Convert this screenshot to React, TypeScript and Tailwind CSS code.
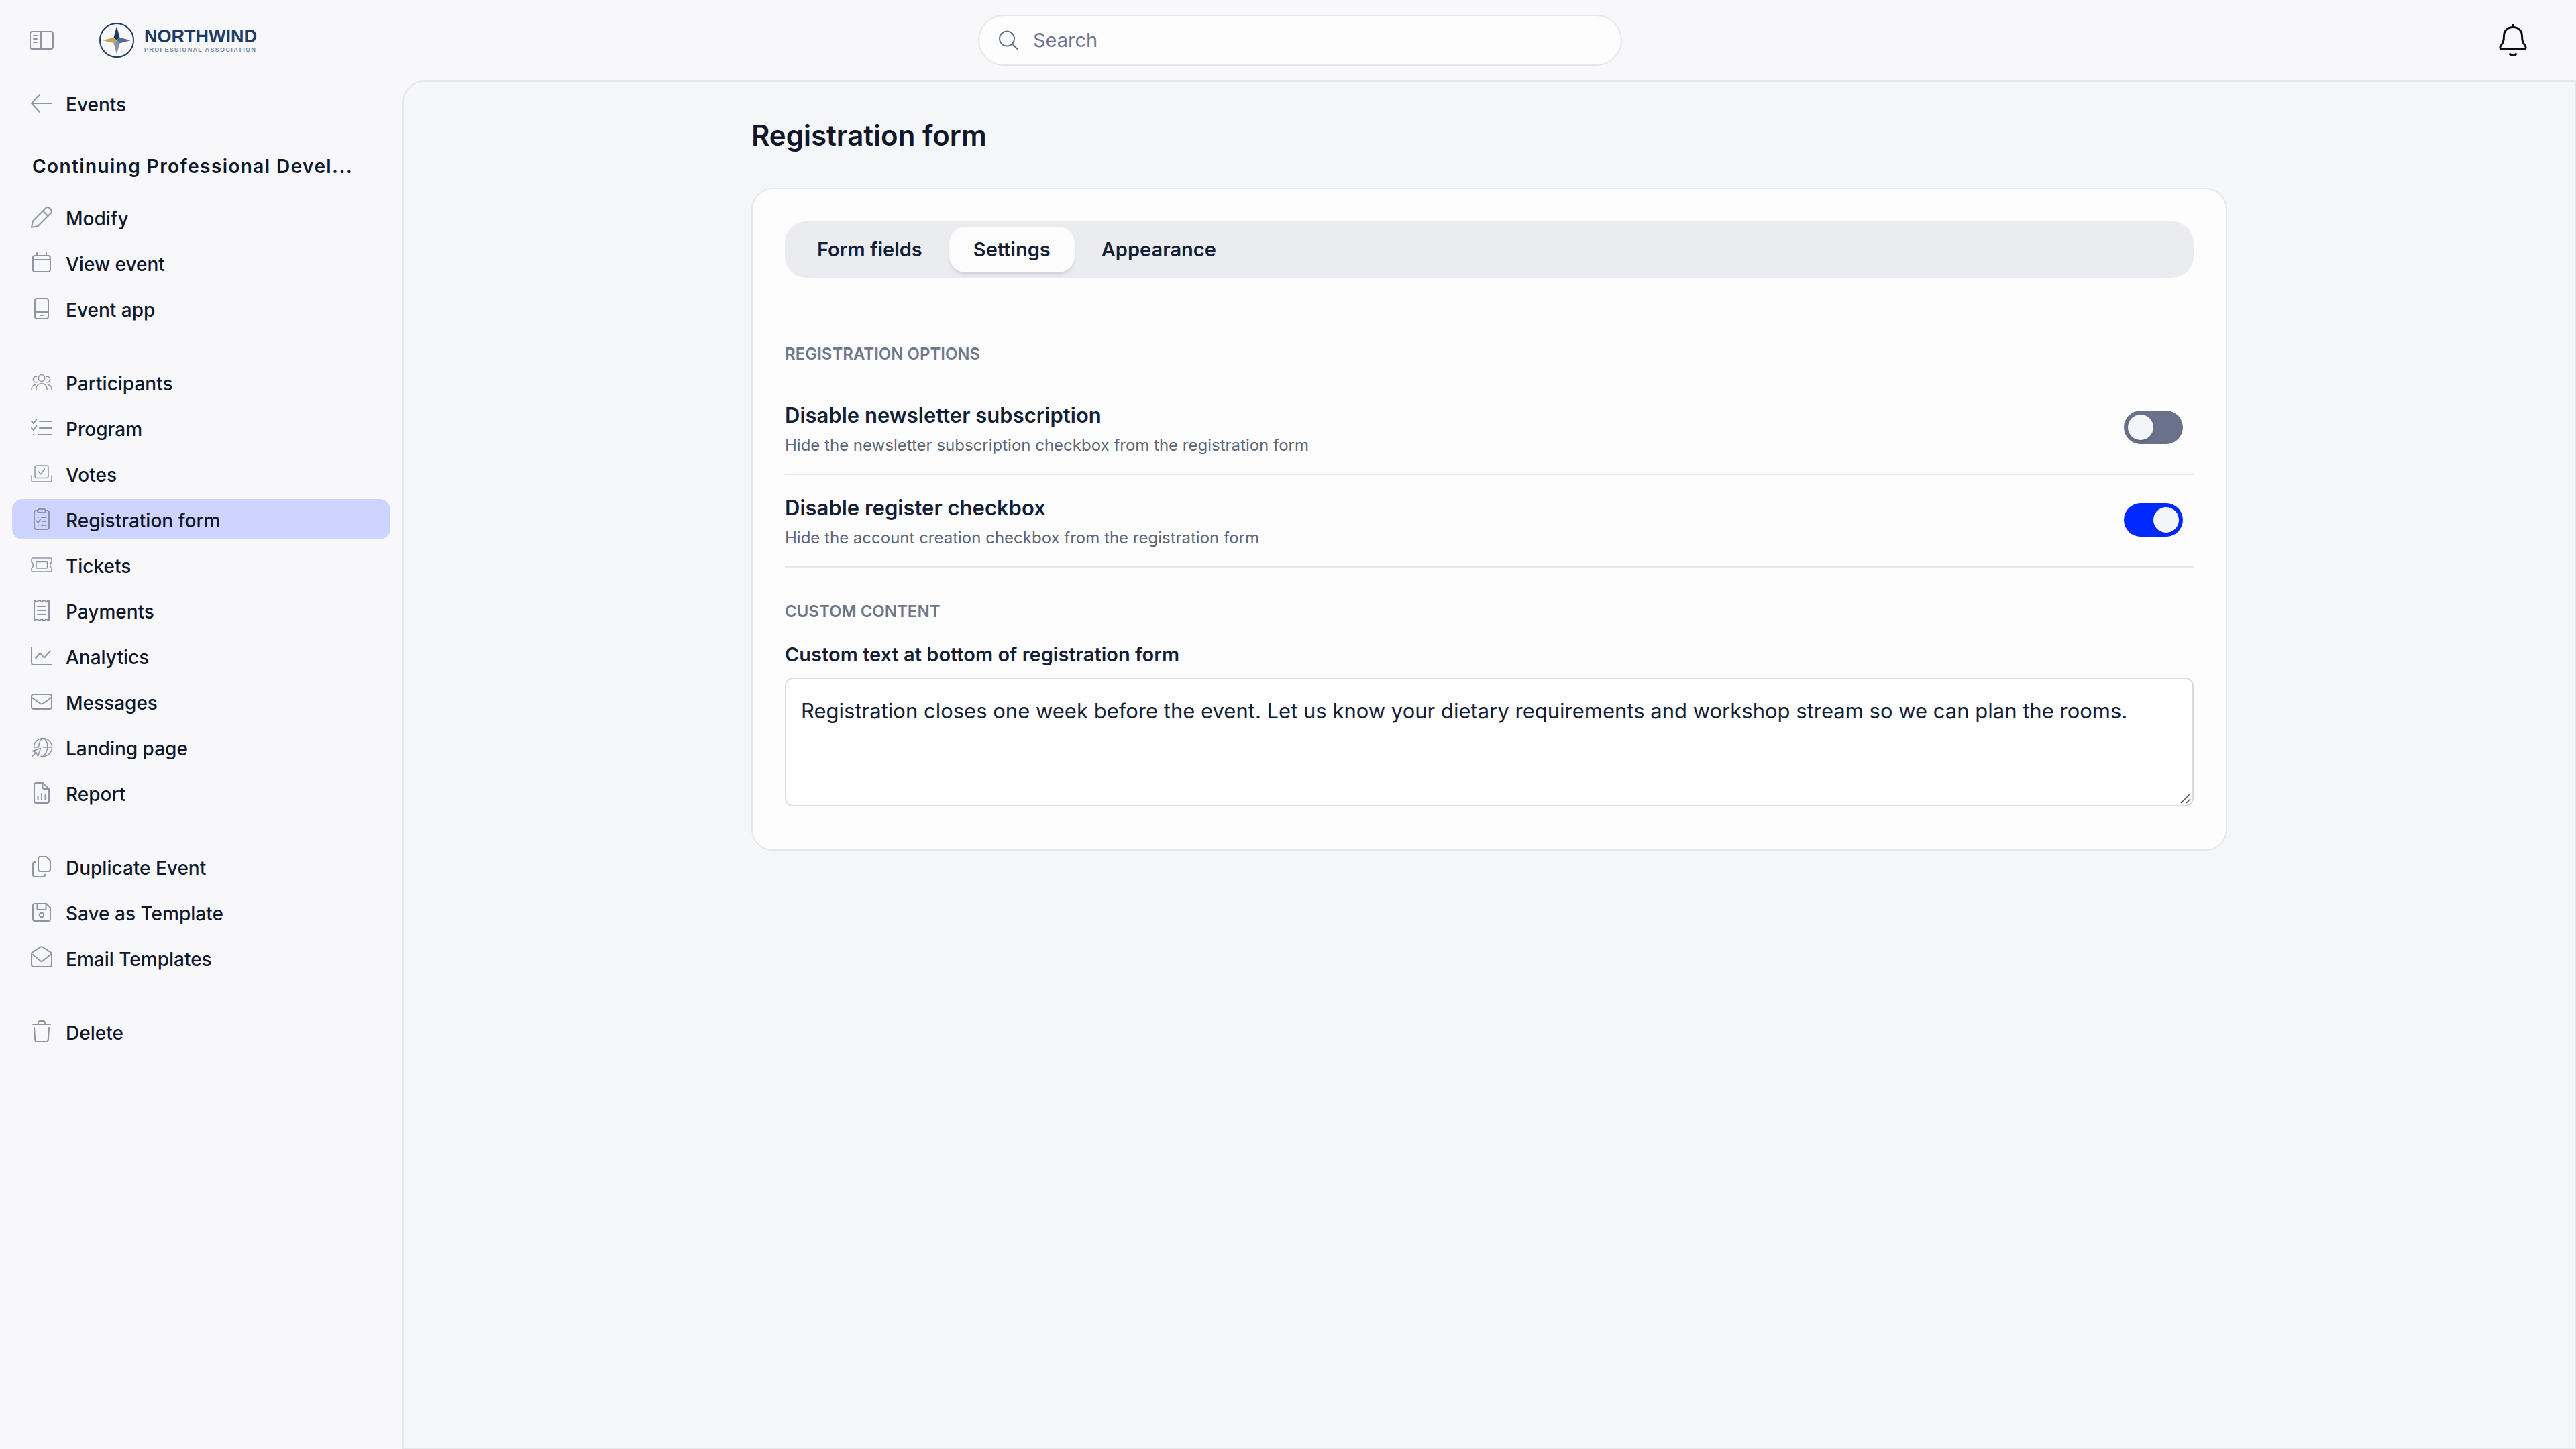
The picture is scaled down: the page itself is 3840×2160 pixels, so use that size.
import { useState } from "react";
import type { ReactNode } from "react";
import clsx from "clsx";

type NavItem = {
    label: string;
    icon: ReactNode;
};

/* Icons share a 40x40 box */
function Icon({ children, thin = false }: { children: ReactNode; thin?: boolean }) {
    return (
        <svg
            viewBox="0 0 40 40"
            className="size-10 shrink-0 text-[#8d95a5]"
            fill="none"
            stroke="currentColor"
            strokeWidth={thin ? 1.5 : 2}
            strokeLinecap="round"
            strokeLinejoin="round"
            aria-hidden="true"
        >
            {children}
        </svg>
    );
}

const eventLinks: NavItem[] = [
    {
        label: "Modify",
        icon: (
            <Icon>
                <path d="M5 35l2-9.5L26.2 6.2a4 4 0 0 1 5.6 0l2 2a4 4 0 0 1 0 5.6L14.5 33zM22 10.5l7.5 7.5" />
            </Icon>
        ),
    },
    {
        label: "View event",
        icon: (
            <Icon>
                <rect x="7" y="9" width="26" height="24" rx="3" />
                <path d="M13 5v4M27 5v4M7 15h26" />
            </Icon>
        ),
    },
    {
        label: "Event app",
        icon: (
            <Icon>
                <rect x="10" y="5" width="20" height="30" rx="3" />
                <path d="M10 25h20M18 30h4" />
            </Icon>
        ),
    },
];

const manageLinks: NavItem[] = [
    {
        label: "Participants",
        icon: (
            <Icon thin>
                <ellipse cx="20" cy="13.5" rx="4.6" ry="5" />
                <path d="M12 31v-1.5a8 8 0 0 1 16 0V31" />
                <path d="M12.5 11.5a4.2 4.2 0 1 0 1 7.8M27.5 11.5a4.2 4.2 0 1 1-1 7.8" />
                <path d="M5 31v-1a6.5 6.5 0 0 1 5.5-6.4M35 31v-1a6.5 6.5 0 0 0-5.5-6.4" />
            </Icon>
        ),
    },
    {
        label: "Program",
        icon: (
            <Icon>
                <path d="M5 10l3 3 4.5-6M5 20l3 3 4.5-6M17 10h18M17 20h18M15 30h20M7.5 30h.5" />
            </Icon>
        ),
    },
    {
        label: "Votes",
        icon: (
            <Icon thin>
                <rect x="10" y="8" width="20" height="18.5" rx="3" />
                <path d="M15.5 17l3.2 4L24.5 13M5 23v7a2 2 0 0 0 2 2h26a2 2 0 0 0 2-2v-7" />
            </Icon>
        ),
    },
    {
        label: "Registration form",
        icon: (
            <Icon>
                <path d="M14 7h-2a3 3 0 0 0-3 3v22a3 3 0 0 0 3 3h16a3 3 0 0 0 3-3V10a3 3 0 0 0-3-3h-2" />
                <rect x="14" y="5" width="12" height="5" rx="2.5" />
                <path d="M20 17h6.5M21 23h5.5M20 29h6.5M14.8 17h.2M14.8 29h.2M13 22.5l2 2 3-4" />
            </Icon>
        ),
    },
    {
        label: "Tickets",
        icon: (
            <Icon thin>
                <path d="M7 10h26a2 2 0 0 1 2 2v4c-3 1.5-3 7.5 0 9v3a2 2 0 0 1-2 2H7a2 2 0 0 1-2-2v-3c3-1.5 3-7.5 0-9v-4a2 2 0 0 1 2-2z" />
                <rect x="12" y="15.5" width="16.5" height="9.5" rx="1" />
            </Icon>
        ),
    },
    {
        label: "Payments",
        icon: (
            <Icon>
                <path d="M9 35V5l3.7 2 3.6-2 3.7 2 3.7-2 3.6 2L31 5v30l-3.7-2-3.6 2-3.7-2-3.7 2-3.6-2z" />
                <path d="M14 14h12M14 20h12M14 26h12" />
            </Icon>
        ),
    },
    {
        label: "Analytics",
        icon: (
            <Icon>
                <path d="M5 7v23a3 3 0 0 0 3 3h27M11 23.5l6.5-8 6.5 7 9-10" />
            </Icon>
        ),
    },
    {
        label: "Messages",
        icon: (
            <Icon>
                <rect x="5" y="9" width="30" height="22" rx="3" />
                <path d="M5.5 14l12.1 8.5a4 4 0 0 0 4.8 0L34.5 14" />
            </Icon>
        ),
    },
    {
        label: "Landing page",
        icon: (
            <Icon thin>
                <path d="M19 33.2A13.5 13.5 0 1 0 8.5 20H15M22.5 20H35" />
                <path d="M21 6.6c-3.5 2.5-5 7-5.3 12.9M23 6.6c8 4.5 8 21-1.5 27" />
                <path d="M5.500 34.2l6.5-6.4M6.5 25.5l12-4-4 12-2.5-5.7z" />
            </Icon>
        ),
    },
    {
        label: "Report",
        icon: (
            <Icon>
                <path d="M22 5H12a3 3 0 0 0-3 3v24a3 3 0 0 0 3 3h16a3 3 0 0 0 3-3V14z" />
                <path d="M21.5 5v7a2 2 0 0 0 2 2H31M14.5 25v5M20 21v9M25.5 23v7" />
            </Icon>
        ),
    },
];

const templateLinks: NavItem[] = [
    {
        label: "Duplicate Event",
        icon: (
            <Icon>
                <path d="M18 5h9l6 6v13a3 3 0 0 1-3 3H18a3 3 0 0 1-3-3V8a3 3 0 0 1 3-3z" />
                <path d="M11 13h-1a3 3 0 0 0-3 3v16a3 3 0 0 0 3 3h12a3 3 0 0 0 3-3v-.5" />
            </Icon>
        ),
    },
    {
        label: "Save as Template",
        icon: (
            <Icon>
                <path d="M10 7h17l6 6v17a3 3 0 0 1-3 3H10a3 3 0 0 1-3-3V10a3 3 0 0 1 3-3z" />
                <path d="M13.5 7v8a1 1 0 0 0 1 1h11a1 1 0 0 0 1-1V7" />
                <circle cx="20" cy="24" r="3.3" />
            </Icon>
        ),
    },
    {
        label: "Email Templates",
        icon: (
            <Icon>
                <path d="M5 13.5c0-.8.3-1.2.9-1.6L18.8 3.5a2 2 0 0 1 2.4 0l12.9 8.4c.6.4.9.8.9 1.6V30a3 3 0 0 1-3 3H8a3 3 0 0 1-3-3z" />
                <path d="M5.5 14l12.8 10.2a2.7 2.7 0 0 0 3.4 0L34.5 14" />
            </Icon>
        ),
    },
];

const deleteLinks: NavItem[] = [
    {
        label: "Delete",
        icon: (
            <Icon>
                <path d="M7 9h26M14.5 9l.9-3.5A2 2 0 0 1 17.3 4h5.4a2 2 0 0 1 1.9 1.5l.9 3.5" />
                <path d="M9 14l1.2 18.2A3 3 0 0 0 13.2 35h13.6a3 3 0 0 0 3-2.8L31 14" />
            </Icon>
        ),
    },
];

function NavLink({ item, active = false }: { item: NavItem; active?: boolean }) {
    return (
        <li>
            <a
                href="#"
                aria-current={active ? "page" : undefined}
                className={clsx(
                    "flex h-15 items-center gap-4 rounded-2xl px-6 text-[28px] leading-10 font-medium text-[#0f172a]",
                    active && "bg-[#ccd4ff]"
                )}
            >
                {item.icon}
                <span className="pt-1">{item.label}</span>
            </a>
        </li>
    );
}

function NavGroup({ items, current }: { items: NavItem[]; current?: string }) {
    return (
        <ul className="flex flex-col gap-2">
            {items.map((item) => (
                <NavLink key={item.label} item={item} active={item.label === current} />
            ))}
        </ul>
    );
}

function Logo() {
    return (
        <a href="#" className="flex items-center gap-3.5" aria-label="Northwind Professional Association">
            <svg viewBox="0 0 54 54" className="size-[54px]" aria-hidden="true">
                <circle cx="27" cy="27" r="25" fill="none" stroke="#1f3a63" strokeWidth="2" />
                <path d="M27 6l4.500 17L27 27l-4.500-4z" fill="#1f3a63" />
                <path d="M48 27l-17 4.500L27 27l4.500-4z" fill="#586a8c" />
                <path d="M27 48l-4.500-17L27 27l4.500 4z" fill="#8293ab" />
                <path d="M6 27l16.500-4L27 27l-4.500 4z" fill="#c9a24a" />
            </svg>
            <span className="flex flex-col font-['Liberation_Sans',sans-serif] font-bold">
                <span className="text-[27px] leading-7 text-[#1f3a63]">NORTHWIND</span>
                <span className="text-[9px] leading-3 tracking-[0.15em] text-[#6f83a0]">PROFESSIONAL ASSOCIATION</span>
            </span>
        </a>
    );
}

function Header() {
    return (
        <header className="grid h-30 grid-cols-[1fr_960px_1fr] items-center pr-1.5 pl-10.5">
            <div className="flex items-center gap-[65px]">
                <button type="button" aria-label="Toggle sidebar">
                    <Icon>
                        <rect x="3" y="7" width="34" height="26" rx="3" />
                        <path d="M19 7v26M8 13h5M8 18h5M8 23h5" />
                    </Icon>
                </button>
                <Logo />
            </div>

            <div className="flex h-19 items-center gap-5 rounded-full border-2 border-[#e6e7eb] bg-[#fdfdfd] px-7">
                <svg viewBox="0 0 32 32" className="size-8 text-[#64748b]" fill="none" stroke="currentColor" strokeWidth="2" strokeLinecap="round" aria-hidden="true">
                    <circle cx="13" cy="13.5" r="11" />
                    <path d="M21 21.500l8 8" />
                </svg>
                <input
                    type="search"
                    aria-label="Search"
                    placeholder="Search"
                    className="min-w-0 flex-1 bg-transparent text-[29px] leading-10 text-[#0f172a] outline-none placeholder:text-[#6b7590]"
                />
            </div>

            <div className="flex justify-end pr-16">
                <button type="button" aria-label="Notifications">
                    <svg viewBox="0 0 48 48" className="size-12 text-[#0b0d12]" fill="none" stroke="currentColor" strokeWidth="3" strokeLinejoin="round" aria-hidden="true">
                        <path d="M24 0v4.500M24 4.500c8 0 13.500 5.500 13.500 13 0 8 1.500 10 4.800 14.800 1.800 3 .7 5.200-2 5.200H7.700c-2.700 0-3.800-2.200-2-5.200C9 27.500 10.500 25.500 10.500 17.500c0-7.500 5.500-13 13.500-13z" />
                        <path d="M18.500 43.500c2.800 3.700 8.200 3.700 11 0" />
                    </svg>
                </button>
            </div>
        </header>
    );
}

function Sidebar() {
    return (
        <aside className="w-[600px] shrink-0 px-4.5 pt-1">
            <a href="#" className="flex h-15 items-center gap-4 px-6 text-[28px] leading-10 font-medium text-[#0f172a]">
                <Icon>
                    <path d="M35 20H5M17 7L5 20l12 13" />
                </Icon>
                <span className="pt-1">Events</span>
            </a>
            <h2 className="mt-11 px-7.5 text-[28px] leading-10 font-semibold tracking-wider whitespace-nowrap text-[#0f172a]">
                Continuing Professional Devel...
            </h2>
            <nav className="mt-[26px] flex flex-col gap-[50px]">
                <NavGroup items={eventLinks} />
                <NavGroup items={manageLinks} current="Registration form" />
                <NavGroup items={templateLinks} />
                <NavGroup items={deleteLinks} />
            </nav>
        </aside>
    );
}

type OptionRowProps = {
    id: string;
    title: string;
    description: string;
    checked: boolean;
    onChange: (checked: boolean) => void;
};

function OptionRow({ id, title, description, checked, onChange }: OptionRowProps) {
    return (
        <div className="flex items-center justify-between border-b-2 border-[#e6e7ed] py-6 pr-4">
            <div>
                <label htmlFor={id} className="block text-[31px] leading-[50px] font-semibold">{title}</label>
                <p className="mt-0.5 text-[24px] leading-9 text-[#5d6577]">{description}</p>
            </div>
            <input
                id={id}
                type="checkbox"
                role="switch"
                checked={checked}
                onChange={(e) => onChange(e.target.checked)}
                className="mb-0.5 flex h-[50px] w-22 shrink-0 appearance-none items-center rounded-full bg-[#69728a] px-1.5 before:size-[38px] before:rounded-full before:bg-[#f4f5f8] before:shadow-md checked:justify-end checked:bg-[#0029ff]"
            />
        </div>
    );
}

const tabs = ["Form fields", "Settings", "Appearance"];

export default function App() {
    const [tab, setTab] = useState("Settings");
    const [disableNewsletter, setDisableNewsletter] = useState(false);
    const [disableRegister, setDisableRegister] = useState(true);

    return (
        <div className="flex min-h-screen flex-col bg-[#f8f8fb] font-[Inter,sans-serif] text-[#141f36]">
            <Header />
            <div className="flex flex-1">
                <Sidebar />
                <main className="flex-1 rounded-tl-[32px] border-2 border-[#e6e7ea] bg-[#f5f6f8]">
                    <div className="mx-auto max-w-[2200px]">
                        <h1 className="pt-[50px] text-[42px] leading-[60px] font-semibold text-[#0f172a]">Registration form</h1>

                        <section className="mt-12 rounded-[32px] border-2 border-[#e6e7eb] bg-[#fdfdfd] px-12 pt-12 pb-16">
                            {/* Tabs */}
                            <div role="tablist" className="flex gap-1 rounded-[32px] bg-[#ebecf0] px-3 py-2">
                                {tabs.map((name) => (
                                    <button
                                        key={name}
                                        type="button"
                                        role="tab"
                                        aria-selected={tab === name}
                                        onClick={() => setTab(name)}
                                        className={clsx(
                                            "h-17 rounded-3xl px-9 text-[29px] leading-10 font-semibold",
                                            tab === name && "bg-[#fdfdfd] shadow-md"
                                        )}
                                    >
                                        {name}
                                    </button>
                                ))}
                            </div>

                            {/* Registration options */}
                            <h2 className="mt-24 mb-6 text-[24px] leading-9 font-semibold text-[#6f7788] uppercase">Registration options</h2>
                            <OptionRow
                                id="disable-newsletter"
                                title="Disable newsletter subscription"
                                description="Hide the newsletter subscription checkbox from the registration form"
                                checked={disableNewsletter}
                                onChange={setDisableNewsletter}
                            />
                            <OptionRow
                                id="disable-register"
                                title="Disable register checkbox"
                                description="Hide the account creation checkbox from the registration form"
                                checked={disableRegister}
                                onChange={setDisableRegister}
                            />

                            {/* Custom content */}
                            <h2 className="mt-12 mb-6 text-[24px] leading-9 font-semibold text-[#6f7788] uppercase">Custom content</h2>
                            <label htmlFor="custom-text" className="mb-3 block text-[29px] leading-11 font-semibold">
                                Custom text at bottom of registration form
                            </label>
                            <div className="relative">
                                <textarea
                                    id="custom-text"
                                    className="block h-48 w-full resize-none rounded-xl border-2 border-[#d8dbe2] bg-white px-[22px] py-6 text-[31px] leading-12 outline-none"
                                    defaultValue="Registration closes one week before the event. Let us know your dietary requirements and workshop stream so we can plan the rooms."
                                />
                                <svg viewBox="0 0 16 16" className="pointer-events-none absolute right-1 bottom-1 size-4 text-[#555]" stroke="currentColor" strokeWidth="1.5" aria-hidden="true">
                                    <path d="M1 15L15 1M9 15l6-6" />
                                </svg>
                            </div>
                        </section>
                    </div>
                </main>
            </div>
        </div>
    );
}
